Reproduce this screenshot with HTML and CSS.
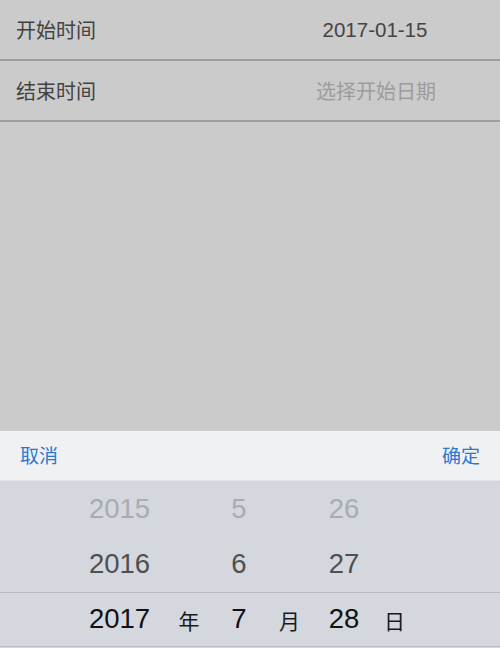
FILE: index.html
```html
<!DOCTYPE html>
<html lang="zh-CN">
<head>
<meta charset="utf-8">
<title>日期选择</title>
<link rel="stylesheet" href="styles.css">
</head>
<body>
<div class="page">
  <div class="form">
    <div class="row">
      <span class="label">开始时间</span>
      <span class="value">2017-01-15</span>
    </div>
    <div class="row">
      <span class="label">结束时间</span>
      <span class="value placeholder">选择开始日期</span>
    </div>
  </div>
  <div class="spacer"></div>
  <div class="sheet">
    <div class="toolbar">
      <span class="btn">取消</span>
      <span class="btn">确定</span>
    </div>
    <div class="picker">
      <div class="band"></div>
      <span class="num far c-year r1">2015</span>
      <span class="num far c-month r1">5</span>
      <span class="num far c-day r1">26</span>
      <span class="num near c-year r2">2016</span>
      <span class="num near c-month r2">6</span>
      <span class="num near c-day r2">27</span>
      <span class="num sel c-year r3">2017</span>
      <span class="unit c-ylab r3">年</span>
      <span class="num sel c-month r3">7</span>
      <span class="unit c-mlab r3">月</span>
      <span class="num sel c-day r3">28</span>
      <span class="unit c-dlab r3">日</span>
    </div>
  </div>
</div>
</body>
</html>
```
FILE: styles.css
```css
html, body {
  margin: 0;
  padding: 0;
}
body {
  width: 500px;
  height: 648px;
  overflow: hidden;
  background: #cbcbcb;
  font-family: "Liberation Sans", "Noto Sans CJK SC", sans-serif;
}
.page {
  display: flex;
  flex-direction: column;
  height: 648px;
}
.form {
  display: flex;
  flex-direction: column;
}
.row {
  display: flex;
  align-items: center;
  height: 59px;
  border-bottom: 2px solid #9e9e9e;
}
.label {
  flex: 0 0 250px;
  padding-left: 16px;
  box-sizing: border-box;
  font-family: "Noto Sans CJK SC", sans-serif;
  font-size: 20px;
  color: #424242;
}
.value {
  flex: 1;
  text-align: center;
  font-size: 20.5px;
  color: #454545;
}
.value.placeholder {
  font-family: "Noto Sans CJK SC", sans-serif;
  font-size: 20px;
  padding-left: 2px;
  color: #9c9c9c;
}
.spacer {
  flex: 1;
}
.sheet {
  display: flex;
  flex-direction: column;
}
.toolbar {
  display: flex;
  justify-content: space-between;
  align-items: center;
  height: 49px;
  padding: 0 20px;
  background: #f0f1f3;
  border-bottom: 1px solid #e2e4e8;
}
.btn {
  font-family: "Noto Sans CJK SC", sans-serif;
  font-size: 19px;
  color: #2b78d0;
  padding-bottom: 3px;
}
.picker {
  display: grid;
  grid-template-columns: 79px 81px 58px 42px 59px 50px 51px 1fr;
  grid-template-rows: 55px 55px 55px;
  padding-top: 1px;
  height: 167px;
  box-sizing: border-box;
  background: #d4d7de;
}
.band {
  grid-column: 1 / -1;
  grid-row: 3;
  border-top: 1px solid #b7bac2;
  border-bottom: 1px solid #b7bac2;
}
.num, .unit {
  display: flex;
  align-items: center;
  justify-content: center;
}
.num {
  font-size: 27.5px;
  padding-bottom: 2px;
}
.unit {
  font-family: "Noto Sans CJK SC", sans-serif;
  font-size: 21px;
  color: #1a1a1a;
  padding-top: 1px;
}
.far { color: #a9abb0; }
.near { color: #4e4f52; }
.sel { color: #111111; }
.r1 { grid-row: 1; }
.r2 { grid-row: 2; }
.r3 { grid-row: 3; }
.c-year { grid-column: 2; }
.c-ylab { grid-column: 3; }
.c-month { grid-column: 4; }
.c-mlab { grid-column: 5; }
.c-day { grid-column: 6; }
.c-dlab { grid-column: 7; }
```
